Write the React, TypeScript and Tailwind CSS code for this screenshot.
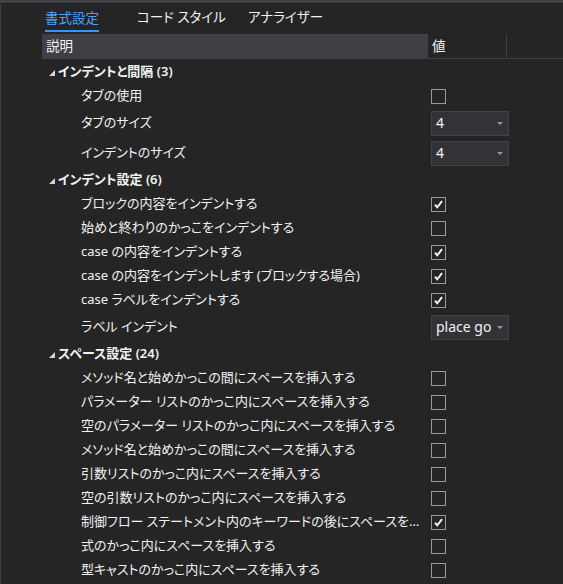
import React from 'react';

type Row =
  | { kind: 'group'; label: string }
  | { kind: 'check'; label: string; checked: boolean }
  | { kind: 'select'; label: string; value: string };

const rows: Row[] = [
  { kind: 'group', label: 'インデントと間隔 (3)' },
  { kind: 'check', label: 'タブの使用', checked: false },
  { kind: 'select', label: 'タブのサイズ', value: '4' },
  { kind: 'select', label: 'インデントのサイズ', value: '4' },
  { kind: 'group', label: 'インデント設定 (6)' },
  { kind: 'check', label: 'ブロックの内容をインデントする', checked: true },
  { kind: 'check', label: '始めと終わりのかっこをインデントする', checked: false },
  { kind: 'check', label: 'case の内容をインデントする', checked: true },
  { kind: 'check', label: 'case の内容をインデントします (ブロックする場合)', checked: true },
  { kind: 'check', label: 'case ラベルをインデントする', checked: true },
  { kind: 'select', label: 'ラベル インデント', value: 'place go' },
  { kind: 'group', label: 'スペース設定 (24)' },
  { kind: 'check', label: 'メソッド名と始めかっこの間にスペースを挿入する', checked: false },
  { kind: 'check', label: 'パラメーター リストのかっこ内にスペースを挿入する', checked: false },
  { kind: 'check', label: '空のパラメーター リストのかっこ内にスペースを挿入する', checked: false },
  { kind: 'check', label: 'メソッド名と始めかっこの間にスペースを挿入する', checked: false },
  { kind: 'check', label: '引数リストのかっこ内にスペースを挿入する', checked: false },
  { kind: 'check', label: '空の引数リストのかっこ内にスペースを挿入する', checked: false },
  { kind: 'check', label: '制御フロー ステートメント内のキーワードの後にスペースを挿入する', checked: true },
  { kind: 'check', label: '式のかっこ内にスペースを挿入する', checked: false },
  { kind: 'check', label: '型キャストのかっこ内にスペースを挿入する', checked: false },
  { kind: 'check', label: '', checked: false },
];

const Checkbox: React.FC<{ checked: boolean }> = ({ checked }) => (
  <div className="w-[15px] h-[15px] border border-[#9a9a9a] flex items-center justify-center">
    {checked ? (
      <svg width="11" height="11" viewBox="0 0 11 11">
        <path d="M2 5.8 L4.3 8.3 L9 2.2" fill="none" stroke="#f4f4f4" strokeWidth="2" />
      </svg>
    ) : null}
  </div>
);

const Select: React.FC<{ value: string }> = ({ value }) => (
  <div className="w-[78px] h-[25px] bg-[#333337] border border-[#434346] flex items-center justify-between pl-[4px] pr-[5px]">
    <span className="whitespace-nowrap text-[14px] text-[#f1f1f1] leading-[20px]">{value}</span>
    <svg width="6" height="3" viewBox="0 0 6 3" className="shrink-0">
      <path d="M0 0 H6 L3 3 Z" fill="#999999" />
    </svg>
  </div>
);

export default function App() {
  return (
    <div
      className="w-[563px] h-[584px] overflow-hidden bg-[#252526] text-[#f1f1f1] flex flex-col [font-feature-settings:'palt']"
      style={{ fontFamily: '"Noto Sans", "Noto Sans CJK JP", sans-serif' }}
    >
      <div className="h-[3px] bg-[#3f3f46] shrink-0" />
      <div className="h-px bg-[#1f1f1f] shrink-0" />
      <div className="flex-1 border-l border-[#3f3f46] flex flex-col">
        {/* tabs */}
        <div className="h-[30px] flex items-start pl-[44px] shrink-0 text-[13.5px]">
          <div className="w-[92px] pt-[4px]">
            <div className="inline-flex flex-col">
              <span className="text-[#4aa3ff] leading-[18px]">書式設定</span>
              <span className="h-[2px] mt-[3px] bg-[#3794ff]" />
            </div>
          </div>
          <div className="w-[111px] pt-[4px] leading-[18px]">コード スタイル</div>
          <div className="pt-[4px] leading-[18px]">アナライザー</div>
        </div>

        {/* column header */}
        <div className="h-[25px] flex shrink-0 border-b border-[#3f3f46] ml-[41px] text-[13.5px]">
          <div className="w-[386px] bg-[#3f3f46] flex items-center pl-[4px]">説明</div>
          <div className="w-[79px] border-r border-[#3f3f46] flex items-center pl-[4px]">値</div>
        </div>

        <div className="ml-[41px] pt-px flex flex-col text-[13px]">
          {rows.map((row, i) => {
            if (row.kind === 'group') {
              return (
                <div key={i} className="h-[24px] flex items-center">
                  <svg width="6" height="6" viewBox="0 0 6 6" className="ml-[7px] mr-[3px] mt-[1px]">
                    <path d="M6 0 V6 H0 Z" fill="#d4d4d4" />
                  </svg>
                  <span className="font-semibold">{row.label}</span>
                </div>
              );
            }
            return (
              <div key={i} className={`${row.kind === 'select' ? 'h-[30px]' : 'h-[24px]'} flex items-center shrink-0`}>
                <div className="w-[386px] pl-[39px] pr-[8px] overflow-hidden whitespace-nowrap text-ellipsis">
                  {row.label}
                </div>
                <div className="pl-[3px]">
                  {row.kind === 'check' ? <Checkbox checked={row.checked} /> : <Select value={row.value} />}
                </div>
              </div>
            );
          })}
        </div>
      </div>
    </div>
  );
}
